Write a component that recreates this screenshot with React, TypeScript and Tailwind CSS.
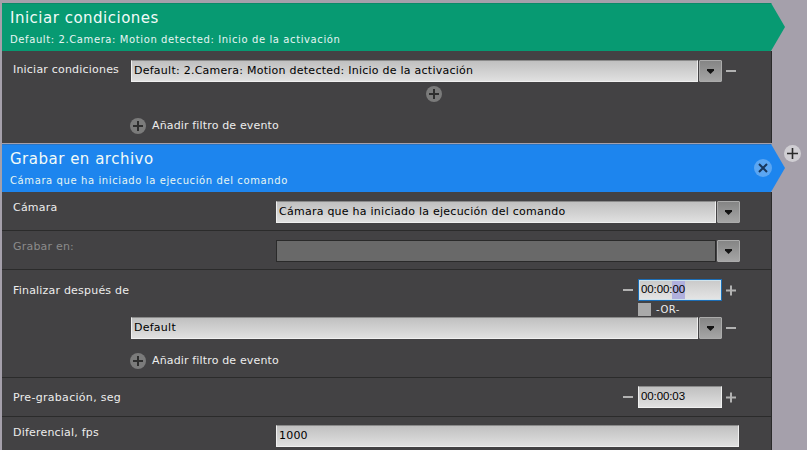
import React from "react";

const inputBg = "bg-gradient-to-b from-[#c0c0c0] to-[#e0e0e0]";

const Header = ({ title, sub, color, edge, children }: { title: string; sub: string; color: string; edge: string; children?: React.ReactNode }) => (
  <div className={`relative h-[48px] w-[783px] pl-[8px] pt-[4px] ${color} ${edge} [clip-path:polygon(0_0,769px_0,783px_24px,769px_48px,0_48px)]`}>
    <div className="text-[15px] leading-[20px] tracking-[0.5px] text-[#f2fbf8]">{title}</div>
    <div className="mt-[5px] text-[10px] leading-[14px] tracking-[0.6px] text-[#e6f5f2]">{sub}</div>
    {children}
  </div>
);

const Minus = () => (
  <span className="block h-[2px] w-[10px] bg-[#b2b2b2]" />
);

const Plus = () => (
  <svg width="10" height="11" viewBox="0 0 10 11" className="block">
    <path d="M0 5.5h10M5 0.5v10" stroke="#b2b2b2" strokeWidth="2" />
  </svg>
);

const Select = ({ text, width, disabled }: { text?: string; width: string; disabled?: boolean }) => (
  <div className={`flex h-[22px] ${width}`}>
    <div className={`flex-1 truncate pl-[2px] text-[11px] leading-[20px] tracking-[0.25px] text-black ${disabled ? "border border-[#2a2a2a] bg-[#696969]" : `border border-[#f0f0f0] border-t-[#8a8a8a] border-l-[#efefef] ${inputBg}`}`}>
      {text}
    </div>
    <div className="ml-[1px] flex w-[23px] items-center justify-center rounded-[1px] border border-[#ababab] bg-gradient-to-b from-[#858585] to-[#a5a5a5]">
      <svg width="7" height="5" viewBox="0 0 7 5" className="block">
        <path d="M0 0h7v1.5L3.5 5 0 1.5z" fill="#141414" />
      </svg>
    </div>
  </div>
);

const TimeField = ({ focused }: { focused?: boolean }) => (
  <div className="flex items-center">
    <Minus />
    <div className={`ml-[5px] flex h-[22px] w-[84px] items-center pl-[2px] font-['Liberation_Sans',sans-serif] text-[11.5px] tracking-[-0.1px] text-black ${focused ? "border border-[#1c6db5] bg-gradient-to-b from-[#c9c9c9] to-[#e6e6e6] shadow-[inset_0_0_0_1px_#cfe4ee]" : `border border-[#f0f0f0] border-t-[#8a8a8a] ${inputBg}`}`}>
      {focused ? (
        <>
          00:00:<span className="bg-[#b0b0dd]">00</span>
        </>
      ) : (
        "00:00:03"
      )}
    </div>
    <div className="ml-[4px]">
      <Plus />
    </div>
  </div>
);

const CircleAdd = () => (
  <span className="flex h-[16px] w-[16px] items-center justify-center rounded-full bg-[#7b7b7b]">
    <svg width="10" height="10" viewBox="0 0 10 10" className="block">
      <path d="M0 5h10M5 0v10" stroke="#2e2e2e" strokeWidth="2" />
    </svg>
  </span>
);

const AddFilter = () => (
  <div className="flex items-center text-[11px] leading-[16px] text-[#ededed]">
    <CircleAdd />
    <span className="ml-[6px] tracking-[0.15px]">Añadir filtro de evento</span>
  </div>
);

export default function App() {
  return (
    <div className="h-[450px] w-[807px] overflow-hidden bg-[#a5a0ab] pl-[2px] pt-[3px] font-['DejaVu_Sans',sans-serif]">
      <Header
        title="Iniciar condiciones"
        sub="Default: 2.Camera: Motion detected: Inicio de la activación"
        color="bg-[#079a72]"
        edge="border-t border-[#0a8a68]"
      />

      <div className="h-[92px] w-[770px] border-r border-[#2a2a2a] bg-[#434244]">
        <div className="flex pl-[11px] pt-[9px]">
          <span className="w-[118px] text-[11px] leading-[20px] tracking-[0.2px] text-[#ededed]">Iniciar condiciones</span>
          <Select width="w-[591px]" text="Default: 2.Camera: Motion detected: Inicio de la activación" />
          <span className="ml-[4px] mt-[10px]">
            <Minus />
          </span>
        </div>
        <div className="mt-[4px] pl-[424px]">
          <CircleAdd />
        </div>
        <div className="mt-[16px] pl-[128px]">
          <AddFilter />
        </div>
      </div>

      <div className="relative mt-[1px]">
        <Header
          title="Grabar en archivo"
          sub="Cámara que ha iniciado la ejecución del comando"
          color="bg-[#1d85ee]"
          edge="border-t border-[#2a75c4]"
        >
          <span className="absolute left-[752px] top-[14px] flex h-[18px] w-[18px] items-center justify-center rounded-full bg-[#5ba6f2]">
            <svg width="10" height="10" viewBox="0 0 10 10" className="block">
              <path d="M1 1l8 8M9 1l-8 8" stroke="#17365c" strokeWidth="2" />
            </svg>
          </span>
        </Header>
        <span className="absolute left-[782px] top-[1px] flex h-[17px] w-[17px] items-center justify-center rounded-full bg-[#d0ced3]">
          <svg width="11" height="11" viewBox="0 0 11 11" className="block">
            <path d="M0 5.5h11M5.5 0v11" stroke="#2a2a2a" strokeWidth="1.6" />
          </svg>
        </span>
      </div>

      <div className="w-[770px] border-r border-[#2a2a2a] bg-[#434244] text-[11px] tracking-[0.2px] text-[#ededed]">
        <div className="flex h-[39px] border-b border-[#2b2b2b] pl-[11px] pt-[9px]">
          <span className="mt-[-1px] w-[263px] leading-[16px]">Cámara</span>
          <Select width="w-[464px]" text="Cámara que ha iniciado la ejecución del comando" />
        </div>
        <div className="flex h-[39px] border-b border-[#2b2b2b] pl-[11px] pt-[9px]">
          <span className="mt-[-1px] w-[263px] leading-[16px] text-[#8b8b8b]">Grabar en:</span>
          <Select width="w-[464px]" disabled />
        </div>
        <div className="h-[108px] border-b border-[#2b2b2b] pl-[11px] pt-[9px]">
          <div className="flex h-[22px] items-center justify-between pr-[35px]">
            <span className="mt-[2px]">Finalizar después de</span>
            <TimeField focused />
          </div>
          <div className="ml-[625px] mt-[1px] flex h-[15px] items-center">
            <span className="block h-[13px] w-[13px] bg-[#a9a9a9]" />
            <span className="ml-[5px] text-[10px] leading-[13px] tracking-[0.5px] text-[#ededed]">-OR-</span>
          </div>
          <div className="flex pl-[118px]">
            <Select width="w-[591px]" text="Default" />
            <span className="ml-[4px] mt-[10px]">
              <Minus />
            </span>
          </div>
          <div className="mt-[14px] pl-[117px]">
            <AddFilter />
          </div>
        </div>
        <div className="flex h-[39px] items-center justify-between border-b border-[#2b2b2b] pl-[11px] pr-[35px]">
          <span className="mt-[2px] tracking-[0.3px]">Pre-grabación, seg</span>
          <TimeField />
        </div>
        <div className="flex h-[40px] pl-[11px] pt-[8px]">
          <span className="w-[263px] leading-[16px]">Diferencial, fps</span>
          <div className={`h-[22px] w-[463px] border border-[#f0f0f0] border-t-[#8a8a8a] pl-[2px] text-[11px] leading-[20px] text-black ${inputBg}`}>
            1000
          </div>
        </div>
      </div>
    </div>
  );
}
